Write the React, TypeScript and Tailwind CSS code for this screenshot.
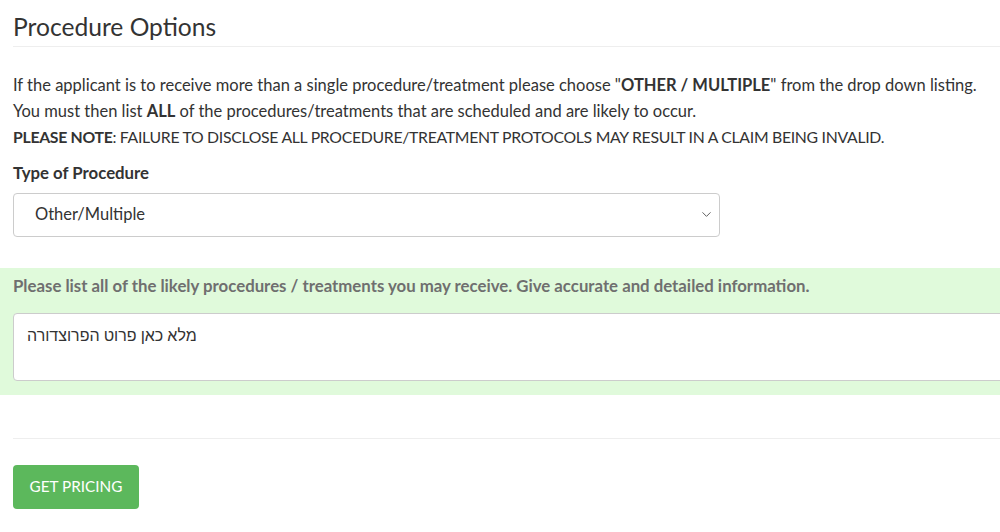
import { ChevronDown } from "lucide-react";

const App: React.FC = () => {
  return (
    <div className="w-[1000px] h-[532px] overflow-hidden bg-white text-[#333] font-['Lato',sans-serif]">
      {/* Heading */}
      <div className="pl-[13px] pt-[10px]">
        <h2 className="text-[24.6px] leading-[33px] text-[#333]">Procedure Options</h2>
        <div className="mt-[3px] border-t border-[#eeeeee]" />
      </div>

      {/* Intro text */}
      <div className="pl-[13px] pt-[26px] text-[16.5px] leading-[25.5px]">
        <p>
          If the applicant is to receive more than a single procedure/treatment please choose "
          <b>OTHER / MULTIPLE</b>" from the drop down listing.
        </p>
        <p>
          You must then list <b>ALL</b> of the procedures/treatments that are scheduled and are likely to occur.
        </p>
        <p className="text-[15.8px] tracking-[-0.3px]">
          <b>PLEASE NOTE</b>: FAILURE TO DISCLOSE ALL PROCEDURE/TREATMENT PROTOCOLS MAY RESULT IN A CLAIM BEING INVALID.
        </p>
      </div>

      {/* Type of procedure */}
      <div className="pl-[13px] pt-[11px]">
        <label className="block text-[16.8px] leading-[24px] font-bold">Type of Procedure</label>
        <div className="mt-[8px] w-[707px] h-[44px] flex items-center justify-between rounded-[4px] border border-[#cccccc] pl-[21px] pr-[5px]">
          <span className="text-[16.5px]">Other/Multiple</span>
          <ChevronDown size={15} strokeWidth={1.5} className="text-[#555]" />
        </div>
      </div>

      {/* Green panel */}
      <div className="mt-[31px] h-[127px] bg-[#e0fadb] pl-[13px] pt-[7px]">
        <p className="text-[16.8px] leading-[22px] font-bold text-[#6f6f6f]">
          Please list all of the likely procedures / treatments you may receive. Give accurate and detailed information.
        </p>
        <div className="mt-[16px] w-[1000px] h-[68px] bg-white rounded-[4px] border border-[#cccccc] px-[13px] pt-[10px]">
          <p dir="rtl" className="w-fit text-[16px] leading-[22px] text-[#333]">
            מלא כאן פרוט הפרוצדורה
          </p>
        </div>
      </div>

      {/* Rule + button */}
      <div className="pl-[13px] pt-[43px]">
        <div className="border-t border-[#eeeeee]" />
        <button className="mt-[26px] h-[44px] w-[126px] rounded-[4px] bg-[#5cb85c] text-white text-[15.3px]">
          GET PRICING
        </button>
      </div>
    </div>
  );
};

export default App;
